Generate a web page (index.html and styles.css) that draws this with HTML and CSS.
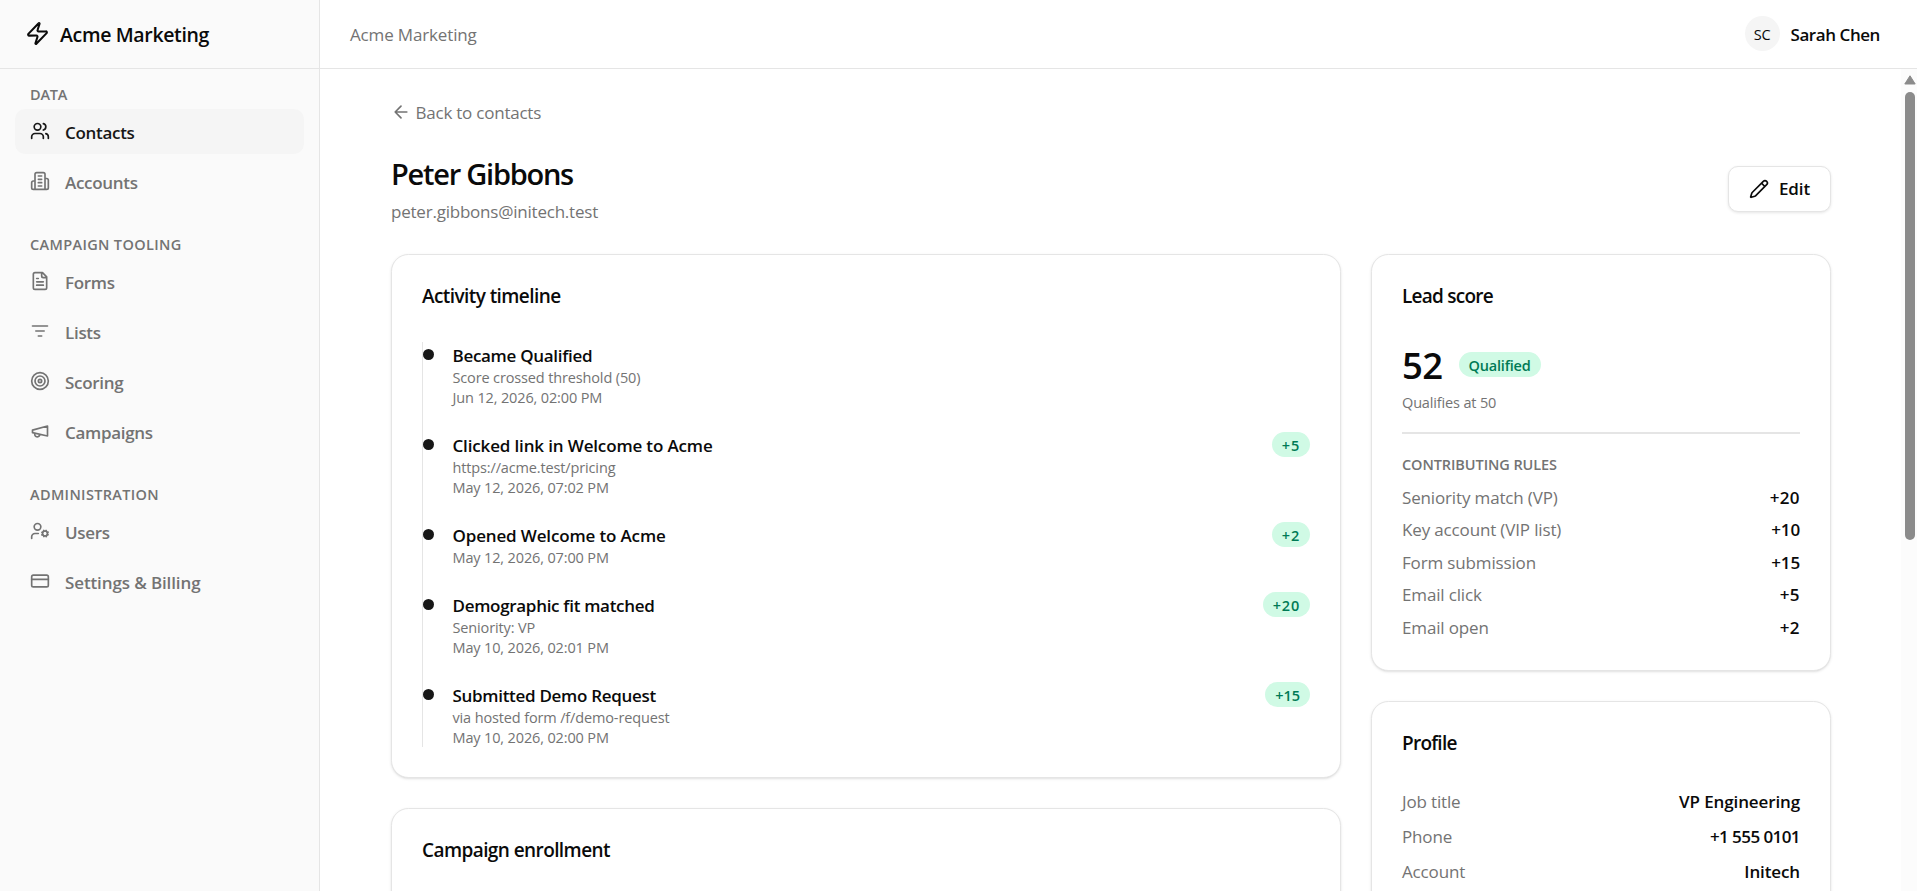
FILE: index.html
```html
<!DOCTYPE html>
<html lang="en">
<head>
<meta charset="utf-8">
<title>Peter Gibbons - Acme Marketing</title>
<link rel="stylesheet" href="styles.css">
</head>
<body>
<div class="app">
  <aside class="sidebar">
    <div class="brand">
      <svg class="icon icon-lg" viewBox="0 0 24 24"><path d="M4 14a1 1 0 0 1-.78-1.63l9.9-10.2a.5.5 0 0 1 .86.46l-1.92 6.02A1 1 0 0 0 13 10h7a1 1 0 0 1 .78 1.63l-9.9 10.2a.5.5 0 0 1-.86-.46l1.92-6.02A1 1 0 0 0 11 14z"/></svg>
      <span class="brand-name">Acme Marketing</span>
    </div>
    <nav class="nav">
      <section class="nav-group">
        <h2 class="nav-label label-data">DATA</h2>
        <a class="nav-item active"><svg class="icon" viewBox="0 0 24 24"><path d="M16 21v-2a4 4 0 0 0-4-4H6a4 4 0 0 0-4 4v2"/><circle cx="9" cy="7" r="4"/><path d="M22 21v-2a4 4 0 0 0-3-3.87M16 3.13a4 4 0 0 1 0 7.75"/></svg><span>Contacts</span></a>
        <a class="nav-item"><svg class="icon" viewBox="0 0 24 24"><path d="M6 22V4a2 2 0 0 1 2-2h8a2 2 0 0 1 2 2v18ZM6 12H4a2 2 0 0 0-2 2v6a2 2 0 0 0 2 2h2M18 9h2a2 2 0 0 1 2 2v9a2 2 0 0 1-2 2h-2M10 6h4M10 10h4M10 14h4M10 18h4"/></svg><span>Accounts</span></a>
      </section>
      <section class="nav-group">
        <h2 class="nav-label">CAMPAIGN TOOLING</h2>
        <a class="nav-item"><svg class="icon" viewBox="0 0 24 24"><path d="M15 2H6a2 2 0 0 0-2 2v16a2 2 0 0 0 2 2h12a2 2 0 0 0 2-2V7ZM14 2v4a2 2 0 0 0 2 2h4M10 9H8M16 13H8M16 17H8"/></svg><span>Forms</span></a>
        <a class="nav-item"><svg class="icon" viewBox="0 0 24 24"><path d="M3 6h18M7 12h10M10 18h4"/></svg><span>Lists</span></a>
        <a class="nav-item"><svg class="icon" viewBox="0 0 24 24"><circle cx="12" cy="12" r="10"/><circle cx="12" cy="12" r="6"/><circle cx="12" cy="12" r="2"/></svg><span>Scoring</span></a>
        <a class="nav-item"><svg class="icon" viewBox="0 0 24 24"><path d="m3 11 18-5v12L3 14v-3zM11.6 16.8a3 3 0 1 1-5.8-1.6"/></svg><span>Campaigns</span></a>
      </section>
      <section class="nav-group">
        <h2 class="nav-label">ADMINISTRATION</h2>
        <a class="nav-item"><svg class="icon" viewBox="0 0 24 24"><circle cx="18" cy="15" r="3"/><circle cx="9" cy="7" r="4"/><path d="M10 15H6a4 4 0 0 0-4 4v2M21.7 16.4l-.9-.3M15.2 13.9l-.9-.3M16.6 18.7l.3-.9M19.1 12.2l.3-.9M19.6 18.7l-.4-1M16.8 12.3l-.4-1M14.3 16.6l1-.4M20.7 13.8l1-.4"/></svg><span>Users</span></a>
        <a class="nav-item"><svg class="icon" viewBox="0 0 24 24"><rect x="2" y="5" width="20" height="14" rx="2"/><path d="M2 10h20"/></svg><span class="wide">Settings &amp; Billing</span></a>
      </section>
    </nav>
  </aside>

  <div class="main">
    <header class="topbar">
      <span class="muted">Acme Marketing</span>
      <div class="user"><span class="avatar">SC</span><span class="user-name">Sarah Chen</span></div>
    </header>
    <div class="viewport">
      <main class="content">
        <a class="back"><svg class="icon" viewBox="0 0 24 24"><path d="m12 19-7-7 7-7M19 12H5"/></svg><span>Back to contacts</span></a>
        <div class="page-head">
          <div>
            <h1 class="page-title">Peter Gibbons</h1>
            <p class="email">peter.gibbons@initech.test</p>
          </div>
          <button class="edit"><svg class="icon" viewBox="0 0 24 24"><path d="M21.174 6.812a1 1 0 0 0-3.986-3.987L3.842 16.174a2 2 0 0 0-.5.83l-1.321 4.352a.5.5 0 0 0 .623.622l4.353-1.32a2 2 0 0 0 .83-.497zM15 5l4 4"/></svg><span>Edit</span></button>
        </div>
        <div class="columns">
          <div class="column">
            <section class="card">
              <h3 class="card-title">Activity timeline</h3>
              <ol class="timeline">
                <li class="event"><i class="dot"></i><div class="event-body"><p class="event-title">Became Qualified</p><p class="event-meta">Score crossed threshold (50)</p><p class="event-meta">Jun 12, 2026, 02:00 PM</p></div></li>
                <li class="event"><i class="dot"></i><div class="event-body"><p class="event-title wide">Clicked link in Welcome to Acme</p><p class="event-meta">https://acme.test/pricing</p><p class="event-meta">May 12, 2026, 07:02 PM</p></div><span class="badge points">+5</span></li>
                <li class="event"><i class="dot"></i><div class="event-body"><p class="event-title wide">Opened Welcome to Acme</p><p class="event-meta">May 12, 2026, 07:00 PM</p></div><span class="badge points">+2</span></li>
                <li class="event"><i class="dot"></i><div class="event-body"><p class="event-title">Demographic fit matched</p><p class="event-meta">Seniority: VP</p><p class="event-meta">May 10, 2026, 02:01 PM</p></div><span class="badge points">+20</span></li>
                <li class="event"><i class="dot"></i><div class="event-body"><p class="event-title">Submitted Demo Request</p><p class="event-meta">via hosted form /f/demo-request</p><p class="event-meta">May 10, 2026, 02:00 PM</p></div><span class="badge">+15</span></li>
              </ol>
            </section>
            <section class="card">
              <h3 class="card-title">Campaign enrollment</h3>
            </section>
          </div>
          <div class="column">
            <section class="card">
              <h3 class="card-title title-tight">Lead score</h3>
              <div class="score"><span class="score-value">52</span><span class="badge badge-label">Qualified</span></div>
              <p class="qualifies">Qualifies at 50</p>
              <div class="rules">
                <h4 class="rules-label">CONTRIBUTING RULES</h4>
                <dl class="pairs">
                  <div class="pair"><dt>Seniority match (VP)</dt><dd class="amount">+20</dd></div>
                  <div class="pair"><dt>Key account (VIP list)</dt><dd>+10</dd></div>
                  <div class="pair"><dt>Form submission</dt><dd>+15</dd></div>
                  <div class="pair"><dt>Email click</dt><dd class="amount">+5</dd></div>
                  <div class="pair"><dt>Email open</dt><dd class="amount">+2</dd></div>
                </dl>
              </div>
            </section>
            <section class="card">
              <h3 class="card-title title-tight">Profile</h3>
              <dl class="pairs pairs-wide">
                <div class="pair"><dt>Job title</dt><dd>VP Engineering</dd></div>
                <div class="pair"><dt>Phone</dt><dd class="phone">+1 555 0101</dd></div>
                <div class="pair"><dt>Account</dt><dd>Initech</dd></div>
              </dl>
            </section>
          </div>
        </div>
      </main>
      <div class="scrollbar">
        <svg class="scroll-arrow" viewBox="0 0 12 10"><path d="M6 .8 11.2 9H.8z"/></svg>
        <div class="scroll-thumb"></div>
      </div>
    </div>
  </div>
</div>
</body>
</html>
```
FILE: styles.css
```css
* { box-sizing: border-box; margin: 0; padding: 0; }

body {
  height: 891px;
  overflow: hidden;
  background: #fff;
  color: #0a0a0a;
  font: 400 17px/25px "Open Sans", "Noto Sans", sans-serif;
  letter-spacing: -0.15px;
}

.app { display: flex; height: 891px; }

.icon {
  flex: none;
  width: 20px;
  height: 20px;
  fill: none;
  stroke: currentColor;
  stroke-width: 2;
  stroke-linecap: round;
  stroke-linejoin: round;
}
.icon-lg { width: 25px; height: 25px; }

/* Sidebar */
.sidebar {
  flex: none;
  width: 320px;
  background: #fafafa;
  border-right: 1px solid #e5e5e5;
}
.brand {
  display: flex;
  align-items: center;
  gap: 10px;
  height: 69px;
  padding: 0 25px 1px;
  border-bottom: 1px solid #e5e5e5;
}
.brand-name {
  padding-top: 2px;
  font-size: 19.5px;
  font-weight: 600;
  letter-spacing: -0.35px;
}
.nav {
  display: flex;
  flex-direction: column;
  gap: 30px;
  padding: 15px;
}
.nav-group { display: flex; flex-direction: column; gap: 5px; }
.nav-label {
  height: 20px;
  padding: 1px 15px 0;
  color: #737373;
  font-size: 14.5px;
  line-height: 20px;
  font-weight: 600;
  letter-spacing: 0.35px;
}
.label-data { letter-spacing: -0.2px; }
.nav-item {
  display: flex;
  align-items: center;
  gap: 15px;
  height: 45px;
  padding: 0 15px;
  border-radius: 10px;
  color: #737373;
  font-weight: 600;
  letter-spacing: -0.3px;
}
.nav-item .icon { margin-bottom: 2px; }
.nav-item span { padding-top: 2px; }
.nav-item.active { background: #f5f5f5; color: #171717; }
.nav-item .wide { letter-spacing: -0.12px; }

/* Top bar */
.main { flex: 1; min-width: 0; display: flex; flex-direction: column; }
.topbar {
  display: flex;
  align-items: center;
  justify-content: space-between;
  height: 69px;
  padding: 0 37px 1px 30px;
  border-bottom: 1px solid #e5e5e5;
}
.muted { padding-top: 1px; color: #737373; }
.user { display: flex; align-items: center; gap: 11px; }
.avatar {
  display: flex;
  align-items: center;
  justify-content: center;
  width: 35px;
  height: 35px;
  padding-top: 1px;
  border-radius: 50%;
  background: #f5f5f5;
  font-size: 14.5px;
  font-weight: 500;
  letter-spacing: -0.3px;
}
.user-name { padding-top: 1px; font-weight: 600; letter-spacing: -0.43px; }

/* Page */
.viewport { flex: 1; min-height: 0; display: flex; }
.content { flex: 1; min-width: 0; height: 822px; overflow: hidden; padding: 30px 70px 0 71px; }
.back {
  display: flex;
  align-items: center;
  gap: 4.5px;
  height: 26px;
  color: #737373;
  letter-spacing: -0.23px;
}
.back span { padding-top: 1px; }
.page-head {
  display: flex;
  align-items: center;
  justify-content: space-between;
  padding: 29px 0 31px;
  height: 129px;
}
.page-title {
  margin-top: 1px;
  font-size: 29px;
  line-height: 40px;
  font-weight: 600;
  letter-spacing: -1.25px;
}
.email { margin-top: 5px; color: #737373; letter-spacing: -0.22px; }
.edit {
  display: flex;
  align-items: center;
  gap: 10px;
  width: 103px;
  height: 46px;
  padding: 0 20px;
  border: 1px solid #e5e5e5;
  border-radius: 10px;
  background: #fff;
  box-shadow: 0 1px 3px rgba(0, 0, 0, .1);
  color: inherit;
  font: inherit;
  font-weight: 600;
  letter-spacing: -0.13px;
}

/* Cards */
.columns { display: grid; grid-template-columns: 950px 460px; gap: 30px; }
.column { display: flex; flex-direction: column; gap: 30px; }
.card {
  padding: 30px;
  border: 1px solid #e5e5e5;
  border-radius: 17.5px;
  background: #fff;
  box-shadow: 0 1px 3px rgba(0, 0, 0, .1), 0 1px 2px -1px rgba(0, 0, 0, .1);
}
.card-title {
  margin: -1px 0 33px;
  font-size: 19px;
  line-height: 25px;
  font-weight: 600;
  letter-spacing: -0.58px;
}
.title-tight { letter-spacing: -0.75px; }

/* Timeline */
.timeline {
  display: flex;
  flex-direction: column;
  gap: 25px;
  border-left: 1px solid #e5e5e5;
  list-style: none;
}
.event { display: flex; align-items: flex-start; }
.dot {
  flex: none;
  width: 11px;
  height: 11px;
  margin: 7px 18.5px 0 0;
  border-radius: 50%;
  background: #171717;
}
.event-body { flex: 1; padding-top: 1px; margin-bottom: -1px; }
.event-title { font-weight: 600; letter-spacing: -0.3px; }
.event-title.wide { letter-spacing: -0.15px; }
.event-meta { color: #737373; font-size: 14.5px; line-height: 20px; letter-spacing: -0.14px; }
.badge {
  display: inline-flex;
  align-items: center;
  height: 25px;
  padding: 1px 10px 0;
  border-radius: 13px;
  background: #d0fae5;
  color: #007a55;
  font-size: 14.5px;
  font-weight: 600;
  letter-spacing: 0;
}
.badge.points { letter-spacing: 0.8px; }
.badge.badge-label { letter-spacing: -0.2px; }

/* Lead score and profile */
.score { display: flex; align-items: center; gap: 16px; height: 45px; }
.score-value { padding-top: 2px; font-size: 36.5px; line-height: 45px; font-weight: 600; letter-spacing: -0.6px; }
.qualifies { margin-top: 5px; padding-top: 1px; color: #737373; font-size: 14.5px; line-height: 20px; }
.rules { margin-top: 19px; padding-top: 21px; border-top: 2px solid #e5e5e5; }
.rules-label {
  margin-bottom: 9.5px;
  color: #737373;
  font-size: 14.5px;
  line-height: 20px;
  font-weight: 600;
  letter-spacing: -0.08px;
}
.pairs { display: flex; flex-direction: column; gap: 7.5px; }
.pairs-wide { gap: 10px; }
.pair { display: flex; justify-content: space-between; }
.pair dt { color: #737373; }
.pair dd { font-weight: 600; letter-spacing: -0.12px; }
.pair .amount { letter-spacing: 0.4px; }
.pair .phone { letter-spacing: -0.57px; }

/* Scrollbar */
.scrollbar {
  flex: none;
  display: flex;
  flex-direction: column;
  align-items: center;
  width: 16px;
  padding: 6px 0 0 1px;
  background: #fcfcfc;
}
.scroll-arrow { width: 12px; height: 10px; fill: #8b8b8b; stroke: #8b8b8b; stroke-linejoin: round; }
.scroll-thumb { width: 10px; height: 448px; margin-top: 7px; border-radius: 5px; background: #8b8b8b; }
```
